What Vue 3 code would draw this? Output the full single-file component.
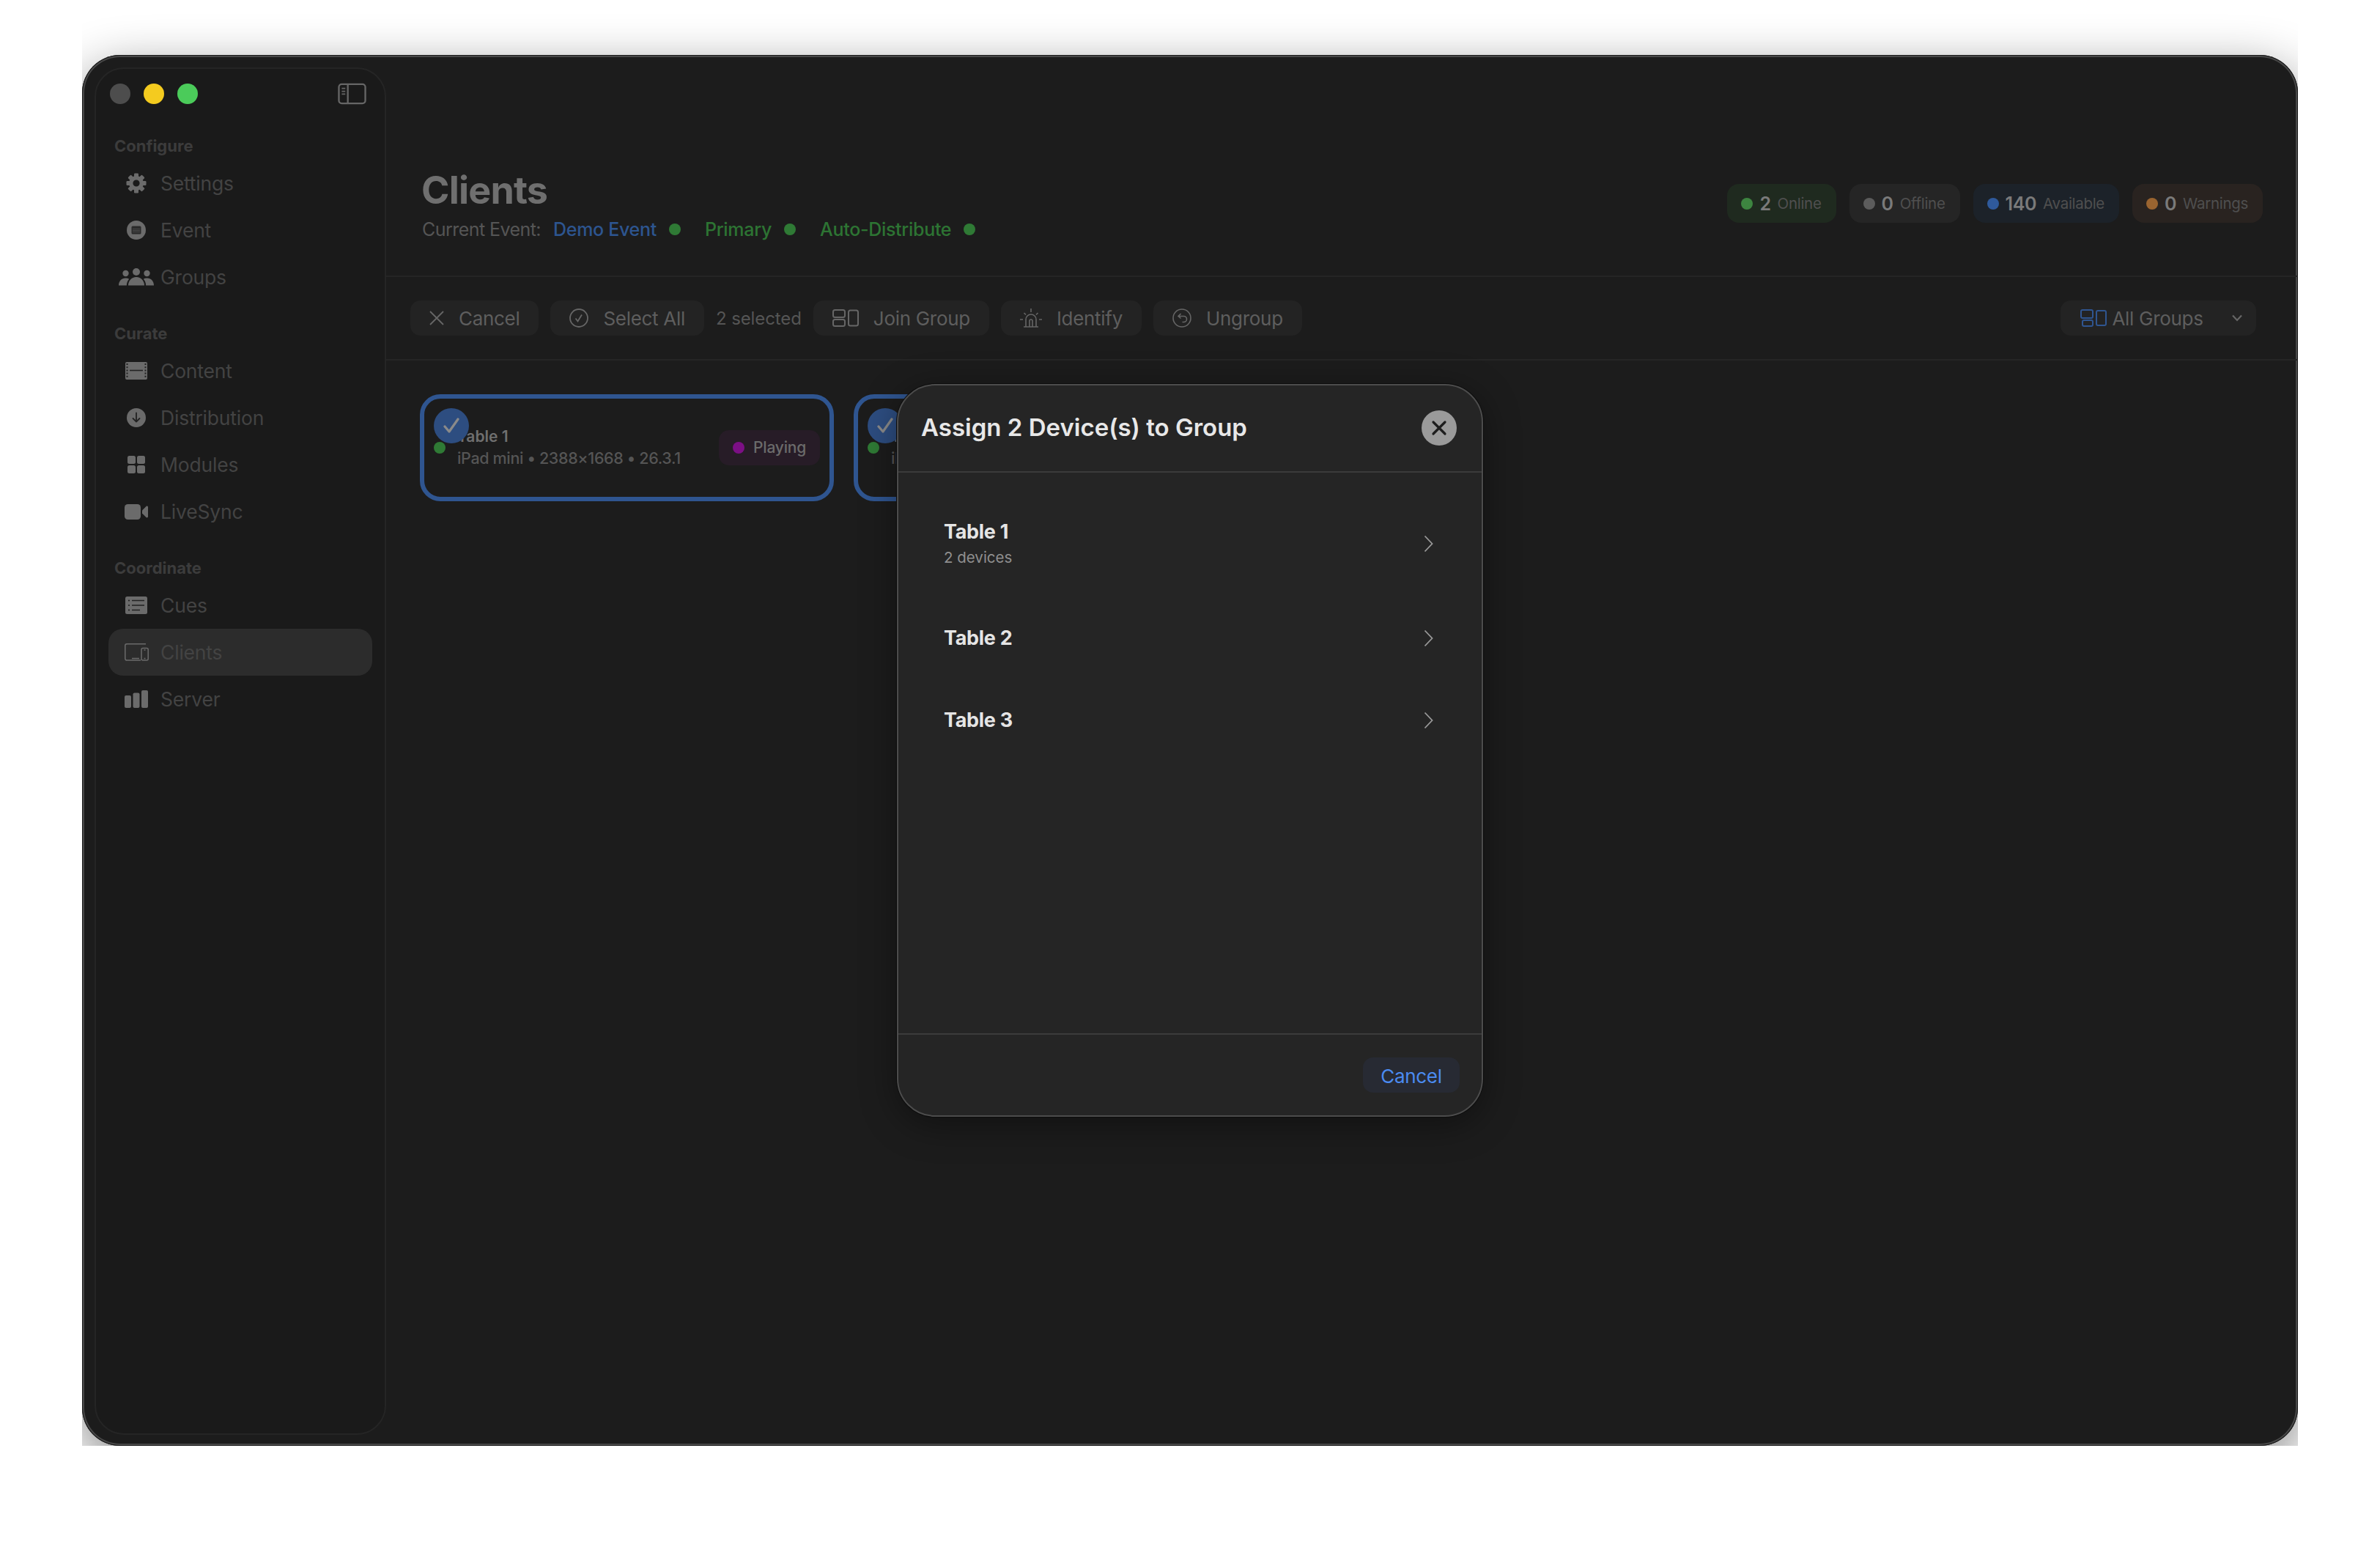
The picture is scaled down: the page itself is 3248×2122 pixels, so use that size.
<script setup>
const sections = [
  { title: 'Configure', items: [
    { name: 'Settings', icon: 'gear' },
    { name: 'Event', icon: 'event' },
    { name: 'Groups', icon: 'people' },
  ] },
  { title: 'Curate', items: [
    { name: 'Content', icon: 'film' },
    { name: 'Distribution', icon: 'download' },
    { name: 'Modules', icon: 'grid' },
    { name: 'LiveSync', icon: 'video' },
  ] },
  { title: 'Coordinate', items: [
    { name: 'Cues', icon: 'list' },
    { name: 'Clients', icon: 'devices', active: true },
    { name: 'Server', icon: 'bars' },
  ] },
]

const stats = [
  { value: 2, label: 'Online', kind: 'online' },
  { value: 0, label: 'Offline', kind: 'offline' },
  { value: 140, label: 'Available', kind: 'available' },
  { value: 0, label: 'Warnings', kind: 'warnings' },
]

const cards = [
  { name: 'Table 1', info: 'iPad mini • 2388×1668 • 26.3.1' },
  { name: 'Table 2', info: 'iPad mini • 2388×1668 • 26.3.1' },
]

const groups = [
  { name: 'Table 1', sub: '2 devices' },
  { name: 'Table 2' },
  { name: 'Table 3' },
]

const gearTeeth = [0, 45, 90, 135, 180, 225, 270, 315]
</script>

<template>
  <div class="shot">
    <div class="window">
      <aside class="sidebar">
        <div class="titlebar">
          <div class="lights">
            <span class="light close"></span>
            <span class="light min"></span>
            <span class="light max"></span>
          </div>
          <svg class="toggle" viewBox="0 0 40 30" fill="none" stroke="#666" stroke-width="2.4">
            <rect x="1.5" y="1.5" width="37" height="27" rx="4" />
            <path d="M14 1.5v27" />
            <path d="M5.5 7.5h5M5.5 11.5h5M5.5 15.5h5" stroke-width="1.8" />
          </svg>
        </div>

        <section v-for="section in sections" :key="section.title" class="nav-section">
          <div class="nav-title">{{ section.title }}</div>
          <div v-for="item in section.items" :key="item.name" class="nav-item" :class="{ active: item.active }">
            <span class="nav-icon">
              <svg v-if="item.icon === 'gear'" width="28" height="28" viewBox="0 0 28 28" fill="#6b6b6b">
                <rect v-for="deg in gearTeeth" :key="deg" x="11" y="0.5" width="6" height="6" rx="1.2" :transform="`rotate(${deg} 14 14)`" />
                <circle cx="14" cy="14" r="7.3" fill="none" stroke="#6b6b6b" stroke-width="5.4" />
              </svg>
              <svg v-else-if="item.icon === 'event'" width="26" height="26" viewBox="0 0 26 26">
                <circle cx="13" cy="13" r="13" fill="#6b6b6b" />
                <rect x="6.5" y="7.5" width="13" height="11" rx="1.5" fill="#2b2b2b" />
                <path d="M8.5 11.5h9M8.5 13.5h9M8.5 15.5h9" stroke="#6b6b6b" stroke-width="1" stroke-dasharray="1 1" />
              </svg>
              <svg v-else-if="item.icon === 'people'" width="48" height="24" viewBox="0 0 48 24" fill="#6b6b6b">
                <circle cx="9.5" cy="7" r="4.2" />
                <circle cx="38.5" cy="7" r="4.2" />
                <circle cx="24" cy="5" r="5" />
                <path d="M0 23.5c0-6 4-10 9.5-10 1.8 0 3.4.4 4.7 1.2-2 2-3.2 5-3.4 8.8zM48 23.5c0-6-4-10-9.5-10-1.8 0-3.4.4-4.7 1.2 2 2 3.2 5 3.4 8.8z" />
                <path d="M13 23.5c0-6 4.500-11.500 11-11.500s11 5.500 11 11.500z" />
              </svg>
              <svg v-else-if="item.icon === 'film'" width="30" height="24" viewBox="0 0 30 24">
                <rect width="30" height="24" rx="2" fill="#6b6b6b" />
                <path d="M6 11.500h18" stroke="#222" stroke-width="1.600" />
                <path d="M2.500 2v20M27.500 2v20" stroke="#222" stroke-width="2" stroke-dasharray="2 2.200" />
              </svg>
              <svg v-else-if="item.icon === 'download'" width="26" height="26" viewBox="0 0 26 26">
                <circle cx="13" cy="13" r="13" fill="#6b6b6b" />
                <path d="M13 6.500v12M8.500 14l4.500 4.500 4.500-4.500" fill="none" stroke="#222" stroke-width="1.800" stroke-linecap="round" stroke-linejoin="round" />
              </svg>
              <svg v-else-if="item.icon === 'grid'" width="24" height="24" viewBox="0 0 24 24" fill="#6b6b6b">
                <rect width="11" height="11" rx="2.500" />
                <rect x="13" width="11" height="11" rx="2.500" />
                <rect y="13" width="11" height="11" rx="2.500" />
                <rect x="13" y="13" width="11" height="11" rx="2.500" />
              </svg>
              <svg v-else-if="item.icon === 'video'" width="32" height="21" viewBox="0 0 32 21" fill="#6b6b6b">
                <rect width="22" height="21" rx="4.500" />
                <path d="M24 8.500 29.500 3c1-.9 2.500-.3 2.500 1v13c0 1.300-1.500 1.900-2.500 1L24 12.500z" />
              </svg>
              <svg v-else-if="item.icon === 'list'" width="30" height="24" viewBox="0 0 30 24">
                <rect width="30" height="24" rx="2.500" fill="#6b6b6b" />
                <path d="M9 5.500h17M9 12h17M9 18.500h11" stroke="#222" stroke-width="1.500" />
                <path d="M5 5.500h.01M5 12h.01M5 18.500h.01" stroke="#222" stroke-width="2.200" stroke-linecap="round" />
              </svg>
              <svg v-else-if="item.icon === 'devices'" width="33" height="24" viewBox="0 0 33 24" fill="none" stroke="#6b6b6b" stroke-width="1.500">
                <path d="M22 23H3a2.200 2.200 0 0 1-2.200-2.200V3A2.200 2.200 0 0 1 3 .8h26" />
                <path d="M10 20.500h10" />
                <rect x="23" y="6.500" width="9.200" height="16.500" rx="2" />
                <path d="M26.500 9h2M26.500 20.500h2" />
              </svg>
              <svg v-else-if="item.icon === 'bars'" width="32" height="24" viewBox="0 0 32 24" fill="#6b6b6b">
                <rect y="7" width="9" height="17" rx="2" />
                <rect x="11.500" y="3.500" width="9" height="20.500" rx="2" />
                <rect x="23" width="9" height="24" rx="2" />
              </svg>
            </span>
            <span class="nav-label">{{ item.name }}</span>
          </div>
        </section>
      </aside>

      <main class="main">
        <header class="header">
          <div>
            <h1 class="title">Clients</h1>
            <div class="subtitle">
              <div class="sub-group">
                <span class="current">Current Event:</span>
                <span class="link blue">Demo Event</span>
                <span class="dot green"></span>
              </div>
              <div class="sub-group">
                <span class="link green-text">Primary</span>
                <span class="dot green"></span>
              </div>
              <div class="sub-group">
                <span class="link green-text">Auto-Distribute</span>
                <span class="dot green"></span>
              </div>
            </div>
          </div>
          <div class="stats">
            <div v-for="stat in stats" :key="stat.label" class="stat" :class="stat.kind">
              <span class="stat-dot"></span>
              <span class="stat-value">{{ stat.value }}</span>
              <span class="stat-label">{{ stat.label }}</span>
            </div>
          </div>
        </header>

        <div class="toolbar">
          <div class="tool-left">
            <button class="tool-btn">
              <svg width="20" height="20" viewBox="0 0 20 20" fill="none" stroke="#666" stroke-width="1.800">
                <path d="M1 1l18 18M19 1 1 19" />
              </svg>
              Cancel
            </button>
            <button class="tool-btn">
              <svg width="26" height="26" viewBox="0 0 26 26" fill="none" stroke="#666" stroke-width="1.800">
                <circle cx="13" cy="13" r="12" />
                <path d="M8.500 13.500l3 4 5.500-9" />
              </svg>
              Select All
            </button>
            <span class="selected">2 selected</span>
            <button class="tool-btn">
              <svg width="36" height="24" viewBox="0 0 36 24" fill="none" stroke="#666" stroke-width="2">
                <rect x="1" y="1" width="16" height="10" rx="2.500" />
                <rect x="1" y="14" width="16" height="9" rx="2.500" />
                <rect x="22" y="1.500" width="13" height="21" rx="2.500" />
              </svg>
              Join Group
            </button>
            <button class="tool-btn">
              <svg width="30" height="26" viewBox="0 0 30 26" fill="none" stroke="#666" stroke-width="1.600">
                <path d="M5 25h20M8 25V15a7 7 0 0 1 14 0v10M13 25v-8a2 2 0 0 1 4 0v8" />
                <path d="M15 0v5M0 15h4M26 15h4M5.500 6l2.500 2.500M24.500 6 22 8.500" />
              </svg>
              Identify
            </button>
            <button class="tool-btn">
              <svg width="26" height="26" viewBox="0 0 26 26" fill="none" stroke="#666" stroke-width="1.600">
                <circle cx="13" cy="13" r="12" />
                <path d="M8.500 10.500h7a4 4 0 0 1 0 8h-2M11.500 7l-3.500 3.500 3.500 3" />
              </svg>
              Ungroup
            </button>
          </div>
          <button class="tool-btn filter">
            <svg width="36" height="24" viewBox="0 0 36 24" fill="none" stroke="#2f5590" stroke-width="2">
              <rect x="1" y="1" width="16" height="11" rx="2" />
              <rect x="3" y="15" width="14" height="8" rx="2" />
              <rect x="22" y="2" width="13" height="20" rx="2" />
            </svg>
            <span class="filter-label">All Groups</span>
            <svg width="14" height="10" viewBox="0 0 14 10" fill="none" stroke="#666" stroke-width="2.200">
              <path d="M1 1.500l6 6.500 6-6.500" />
            </svg>
          </button>
        </div>

        <div class="cards">
          <div v-for="card in cards" :key="card.name" class="card">
            <span class="card-check">
              <svg width="24" height="22" viewBox="0 0 24 22" fill="none" stroke="#8a8a8a" stroke-width="3.200" stroke-linecap="round" stroke-linejoin="round">
                <path d="M3 12l6 7L21 2" />
              </svg>
            </span>
            <span class="card-online"></span>
            <div class="card-text">
              <div class="card-name">{{ card.name }}</div>
              <div class="card-info">{{ card.info }}</div>
            </div>
            <div class="playing">
              <span class="playing-dot"></span>
              <span class="playing-label">Playing</span>
            </div>
          </div>
        </div>
      </main>

      <div class="modal">
        <div class="modal-head">
          <h2 class="modal-title">Assign 2 Device(s) to Group</h2>
          <span class="modal-close">
            <svg width="22" height="22" viewBox="0 0 22 22" fill="none" stroke="#1d1d1d" stroke-width="3.200" stroke-linecap="round">
              <path d="M3 3l16 16M19 3 3 19" />
            </svg>
          </span>
        </div>
        <div class="modal-body">
          <div v-for="group in groups" :key="group.name" class="group-row" :class="{ tall: group.sub }">
            <div>
              <div class="group-name">{{ group.name }}</div>
              <div v-if="group.sub" class="group-sub">{{ group.sub }}</div>
            </div>
            <svg width="13" height="24" viewBox="0 0 13 24" fill="none" stroke="#9a9a9a" stroke-width="1.800">
              <path d="M1.500 1.500 11.500 12l-10 10.500" />
            </svg>
          </div>
        </div>
        <div class="modal-foot">
          <button class="modal-cancel">Cancel</button>
        </div>
      </div>
    </div>
  </div>
</template>

<style>
html, body {
  background: #fff;
}
</style>

<style scoped>
.shot {
  width: 3024px;
  height: 1973px;
  margin-left: 112px;
  padding-top: 75px;
  box-sizing: border-box;
  overflow: hidden;
  font-family: Inter, "Liberation Sans", sans-serif;
}

.window {
  position: relative;
  display: flex;
  height: 1898px;
  background: #1c1c1c;
  border-radius: 52px;
  box-shadow: inset 0 0 0 1px #1a1a1a, inset 0 0 0 3px #484848, 0 22px 70px rgba(0, 0, 0, 0.48);
}

.sidebar {
  width: 398px;
  height: 1866px;
  margin: 17px 0 15px 17px;
  box-sizing: border-box;
  flex-shrink: 0;
  background: #1a1a1a;
  border: 2px solid #252525;
  border-radius: 40px;
}

.titlebar {
  display: flex;
  align-items: center;
  justify-content: space-between;
  height: 30px;
  padding: 19px 25px 0 19px;
}

.lights {
  display: flex;
  gap: 18px;
}

.light {
  width: 28px;
  height: 28px;
  border-radius: 50%;
}

.light.close { background: #4d4d4d; }
.light.min { background: #f4cb1f; }
.light.max { background: #4bcb5a; }

.toggle {
  width: 39px;
  height: 30px;
}

.nav-section {
  margin-top: 30px;
}

.nav-section:first-of-type {
  margin-top: 41px;
}

.nav-title {
  height: 30px;
  line-height: 30px;
  margin-bottom: 4px;
  padding-left: 25px;
  font-size: 22px;
  font-weight: 700;
  color: #3c3c3c;
}

.nav-item {
  display: flex;
  align-items: center;
  height: 64px;
  margin: 0 17px;
  padding-left: 8px;
  border-radius: 20px;
}

.nav-item.active {
  background: #2c2c2c;
}

.nav-icon {
  display: flex;
  align-items: center;
  justify-content: center;
  width: 60px;
  margin-right: 3px;
}

.nav-label {
  font-size: 26.5px;
  letter-spacing: -0.2px;
  color: #434343;
}

.main {
  flex: 1;
  min-width: 0;
}

.header {
  display: flex;
  justify-content: space-between;
  align-items: flex-start;
  height: 301px;
  padding: 0 48px 0 48px;
  border-bottom: 2px solid #252525;
}

.title {
  margin: 158px 0 0;
  font-size: 52px;
  line-height: 54px;
  font-weight: 700;
  letter-spacing: -0.8px;
  color: #6f6f6f;
}

.subtitle {
  display: flex;
  align-items: center;
  gap: 33px;
  margin-top: 9px;
  margin-left: 1px;
  height: 34px;
  font-size: 25px;
  color: #555;
}

.sub-group {
  display: flex;
  align-items: center;
  gap: 17px;
}

.current {
  letter-spacing: -0.55px;
}

.link {
  font-weight: 500;
  letter-spacing: -0.3px;
}

.blue { color: #2d5590; }
.green-text { color: #2d7433; }

.dot {
  width: 16px;
  height: 16px;
  border-radius: 50%;
}

.dot.green { background: #2f7a35; }

.stats {
  display: flex;
  gap: 18px;
  margin-top: 176px;
}

.stat {
  display: flex;
  align-items: center;
  height: 53px;
  padding: 0 20px 0 19px;
  border-radius: 16px;
}

.stat-dot {
  width: 16px;
  height: 16px;
  margin-right: 9px;
  border-radius: 50%;
}

.stat-value {
  margin-right: 9px;
  font-size: 25px;
  font-weight: 600;
  letter-spacing: -0.4px;
  color: #7a7a7a;
}

.stat-label {
  font-size: 20.5px;
  letter-spacing: -0.3px;
  color: #4f4f4f;
}

.stat.online { background: #1f2a1f; }
.stat.online .stat-dot { background: #3d8540; }
.stat.offline { background: #252525; }
.stat.offline .stat-dot { background: #5c5c5c; }
.stat.available { background: #1c2229; }
.stat.available .stat-dot { background: #2f5a9c; }
.stat.warnings { background: #292320; }
.stat.warnings .stat-dot { background: #9a6430; }

.toolbar {
  display: flex;
  align-items: center;
  justify-content: space-between;
  height: 112px;
  padding: 0 57px 0 33px;
  border-bottom: 2px solid #252525;
}

.tool-left {
  display: flex;
  align-items: center;
  gap: 16px;
}

.tool-btn {
  display: flex;
  align-items: center;
  gap: 20px;
  height: 48px;
  padding: 0 26px;
  border: none;
  border-radius: 14px;
  background: #232323;
  font-family: inherit;
  font-size: 26px;
  letter-spacing: -0.3px;
  color: #5e5e5e;
}

.selected {
  font-size: 24px;
  letter-spacing: -0.1px;
  color: #555;
}

.tool-btn.filter {
  gap: 7px;
  padding: 0 19px 0 27px;
}

.filter-label {
  width: 125px;
  margin-right: 32px;
  white-space: nowrap;
}

.cards {
  display: flex;
  gap: 27px;
  padding: 46px 0 0 46px;
}

.card {
  position: relative;
  display: flex;
  align-items: center;
  justify-content: space-between;
  flex-shrink: 0;
  width: 565px;
  height: 146px;
  box-sizing: border-box;
  padding: 0 13px 0 45px;
  border: 6px solid #2f5590;
  border-radius: 28px;
}

.card-check {
  position: absolute;
  left: 13px;
  top: 13px;
  z-index: 1;
  display: flex;
  align-items: center;
  justify-content: center;
  width: 48px;
  height: 48px;
  border-radius: 50%;
  background: #2d4d80;
}

.card-online {
  position: absolute;
  left: 13px;
  top: 59px;
  width: 16px;
  height: 16px;
  border-radius: 50%;
  background: #2f7a35;
}

.card-text {
  margin-top: -2px;
}

.card-name {
  font-size: 21px;
  line-height: 28px;
  font-weight: 600;
  color: #6f6f6f;
}

.card-info {
  margin-top: 1px;
  font-size: 21.5px;
  line-height: 28px;
  font-weight: 500;
  letter-spacing: -0.35px;
  color: #555;
}

.playing {
  display: flex;
  align-items: center;
  gap: 12px;
  height: 48px;
  padding: 0 19px 0 19px;
  border-radius: 14px;
  background: #271c27;
}

.playing-label {
  margin-top: -2px;
  font-size: 21px;
  font-weight: 500;
  letter-spacing: -0.2px;
  color: #6b6b6b;
}

.playing-dot {
  width: 16px;
  height: 16px;
  border-radius: 50%;
  background: #7c0f85;
}

.modal {
  position: absolute;
  left: 1112px;
  top: 449px;
  z-index: 2;
  display: flex;
  flex-direction: column;
  width: 800px;
  height: 1000px;
  box-sizing: border-box;
  background: #252525;
  border: 2px solid #4c4c4c;
  border-radius: 52px;
  box-shadow: 0 0 0 1px #0c0c0c, 0 10px 50px rgba(0, 0, 0, 0.4);
}

.modal-head {
  display: flex;
  align-items: center;
  justify-content: space-between;
  height: 117px;
  padding: 0 34px 0 31px;
  border-bottom: 2px solid #3b3b3b;
}

.modal-title {
  margin: -3px 0 0;
  font-size: 33px;
  font-weight: 600;
  color: #e8e8e8;
}

.modal-close {
  display: flex;
  align-items: center;
  justify-content: center;
  width: 48px;
  height: 48px;
  margin-top: -2px;
  border-radius: 50%;
  background: #9a9a9a;
}

.modal-body {
  flex: 1;
  padding: 24px 0 0 62px;
}

.group-row {
  display: flex;
  align-items: center;
  justify-content: space-between;
  height: 112px;
  padding-right: 66px;
}

.group-row.tall {
  height: 146px;
}

.group-name {
  font-size: 27px;
  line-height: 34px;
  font-weight: 700;
  letter-spacing: -0.3px;
  color: #e5e5e5;
}

.group-sub {
  margin-top: 4px;
  font-size: 20.5px;
  line-height: 28px;
  color: #8f8f8f;
}

.modal-foot {
  display: flex;
  justify-content: flex-end;
  align-items: center;
  height: 110px;
  padding-right: 30px;
  border-top: 2px solid #3b3b3b;
}

.modal-cancel {
  width: 132px;
  height: 48px;
  padding: 2px 0 0;
  border: none;
  border-radius: 14px;
  background: #272a33;
  font-family: inherit;
  font-size: 26px;
  letter-spacing: -0.3px;
  color: #4b8bf0;
}
</style>
